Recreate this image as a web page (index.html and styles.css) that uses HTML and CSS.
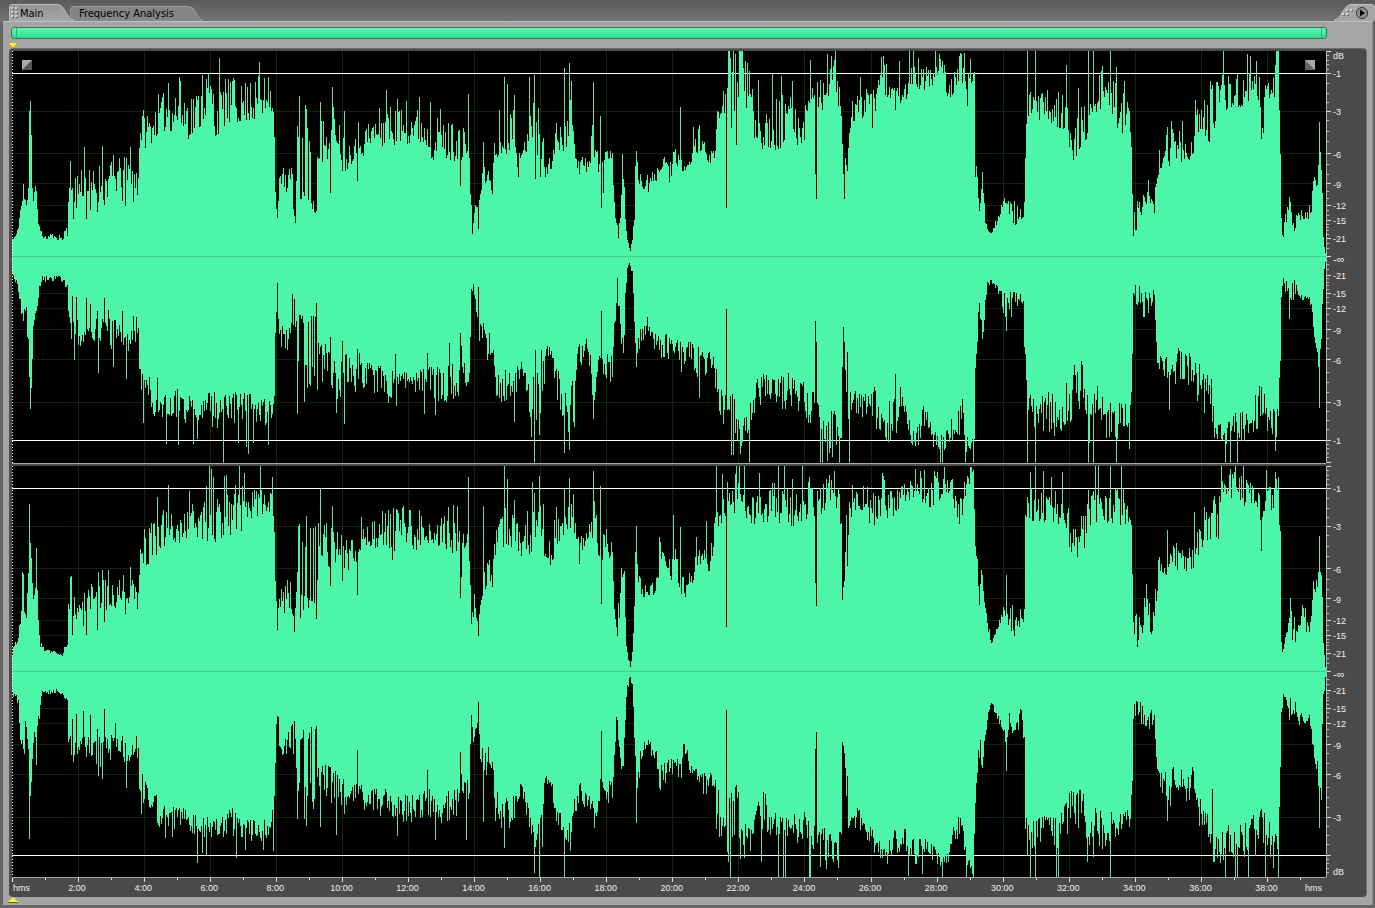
FILE: index.html
```html
<!DOCTYPE html>
<html lang="en">
<head>
<meta charset="utf-8">
<title>Main</title>
<link rel="stylesheet" href="styles.css">
</head>
<body>
<header class="topbar">
  <nav class="tabs" role="tablist">
    <button class="tab tab-main" role="tab" aria-selected="true">
      <svg class="tab-shape" width="66" height="17" viewBox="0 0 66 17" aria-hidden="true">
        <defs><linearGradient id="tg" x1="0" y1="0" x2="0" y2="1"><stop offset="0" stop-color="#939393"/><stop offset="1" stop-color="#a8a8a8"/></linearGradient></defs>
        <path d="M0 17V3Q0 .5 3 .5H48C57 .5 57 16 66 17Z" fill="url(#tg)"/>
        <path d="M.5 17V3Q.5 .5 3 .5H48C57 .5 57 16 65 16" fill="none" stroke="#bdbdbd"/>
        <g fill="#d2d2d2"><path d="M2 3h2v2h-2zM6 3h2v2h-2zM2 7h2v2h-2zM6 7h2v2h-2zM2 11h2v2h-2zM6 11h2v2h-2z"/></g>
        <g fill="#747474"><path d="M4 4h1v2h-2v-1h1zM8 4h1v2h-2v-1h1zM4 8h1v2h-2v-1h1zM8 8h1v2h-2v-1h1zM4 12h1v2h-2v-1h1zM8 12h1v2h-2v-1h1z"/></g>
      </svg>
      <span class="tab-text">Main</span>
    </button>
    <button class="tab tab-freq" role="tab" aria-selected="false">
      <svg class="tab-shape" width="134" height="15" viewBox="0 0 134 15" aria-hidden="true">
        <path d="M0 15Q-2 .5 4 .5H118C127 .5 125 13 134 15Z" fill="#858585"/>
        <path d="M0 12Q-1 .5 4 .5H118C127 .5 125 13 133 14" fill="none" stroke="#a0a0a0"/>
      </svg>
      <span class="tab-text">Frequency Analysis</span>
    </button>
  </nav>
  <button class="panel-menu" aria-label="Panel menu">
    <svg width="42" height="17" viewBox="0 0 42 17" aria-hidden="true">
      <path d="M0 17C9 15 8 .5 18 .5H37Q41 .5 41 5V17Z" fill="#a5a5a5"/>
      <path d="M0 16C9 15 8 .5 18 .5H37Q41 .5 41 5" fill="none" stroke="#c4c4c4"/>
      <g fill="#d8d8d8"><path d="M12 5h2v2h-2zM16 5h2v2h-2zM8 9h2v2h-2zM12 9h2v2h-2z"/></g>
      <g fill="#6d6d6d"><path d="M14 6h1v2h-2v-1h1zM18 6h1v2h-2v-1h1zM10 10h1v2h-2v-1h1zM14 10h1v2h-2v-1h1z"/></g>
      <circle cx="28" cy="9" r="5.500" fill="#919191" stroke="#303030"/>
      <path d="M26 5.500L31 9L26 12.500Z" fill="#000"/>
    </svg>
  </button>
</header>
<main class="panel">
  <div class="overview" aria-label="Overview range"><span class="grip"></span><span class="grip"></span></div>
  <div class="marker-row">
    <svg width="10" height="6" viewBox="0 0 10 6" aria-hidden="true"><path d="M0 0H10L5 5Z" fill="#fbf13c"/><path d="M10 0L5 5L0 0" fill="none" stroke="#b49a20"/></svg>
  </div>
  <div class="display">
    <div class="channel"><svg class="plot" id="plot0" role="img" aria-label="Left channel waveform"></svg><svg class="db" id="db0"></svg></div>
    <div class="split"></div>
    <div class="channel"><svg class="plot" id="plot1" role="img" aria-label="Right channel waveform"></svg><svg class="db" id="db1"></svg></div>
    <div class="timeline"><svg class="time" id="time"></svg></div>
    <svg class="fade fade-in" width="10" height="10" viewBox="0 0 10 10" aria-hidden="true"><path d="M0 0H10V10H0Z" fill="#555"/><path d="M0 0H10L0 10Z" fill="#aaa"/></svg>
    <svg class="fade fade-out" width="10" height="10" viewBox="0 0 10 10" aria-hidden="true"><path d="M0 0H10V10H0Z" fill="#666"/><path d="M0 0H10V10Z" fill="#aaa"/></svg>
  </div>
  <div class="marker-row">
    <svg width="10" height="6" viewBox="0 0 10 6" aria-hidden="true"><path d="M0 5L5 0L10 5Z" fill="#fbf13c"/><path d="M0 5.500H10" stroke="#6b6320"/></svg>
  </div>
</main>
<script src="wave.js"></script>
</body>
</html>
```
FILE: styles.css
```css
* { box-sizing: border-box; }
html, body { height: 100%; }
body {
  margin: 0;
  padding: 0 2px 3px 3px;
  display: flex;
  flex-direction: column;
  background: #666;
  font: 11px/13px "DejaVu Sans Condensed", "Liberation Sans", sans-serif;
  color: #000;
}
button { border: 0; padding: 0; background: none; font: inherit; color: inherit; }
.topbar {
  display: flex;
  justify-content: space-between;
  align-items: flex-end;
  height: 21px;
  margin: 0 -2px 0 -3px;
  padding-left: 9px;
  background: linear-gradient(#5a5a5a, #747474);
}
.tabs { display: flex; align-items: flex-end; }
.tab { display: grid; align-items: center; text-align: left; }
.tab-shape, .tab-text { grid-area: 1 / 1; }
.tab-shape { display: block; }
.tab-main { position: relative; z-index: 1; }
.tab-main .tab-text { padding: 2px 0 0 11px; }
.tab-freq { margin-left: -5px; }
.tab-freq .tab-text { padding-left: 9px; }
.panel-menu, .panel-menu svg { display: block; height: 17px; }
.panel-menu { margin-right: -1px; width: 42px; }
.panel {
  flex: 1;
  min-height: 0;
  display: flex;
  flex-direction: column;
  padding: 5px 5px 2px 6px;
  background: #a5a5a5;
  border-top: 1px solid #c0c0c0;
  border-right: 1px solid #8a8a8a;
}
.overview {
  display: flex;
  justify-content: space-between;
  height: 12px;
  margin: 0 40px 0 2px;
  padding: 0 4px;
  border: 1px solid #36755a;
  border-radius: 3px;
  background: linear-gradient(#6df0b4, #46efa0 45%, #39d78c);
}
.grip { width: 1px; background: #2fb578; }
.marker-row { height: 6px; line-height: 0; }
.overview + .marker-row { margin-top: 4px; height: 5px; }
.marker-row svg { display: block; margin-left: -1px; }
.display {
  position: relative;
  flex: 1;
  min-height: 0;
  display: flex;
  flex-direction: column;
  padding: 2px 0 0 3px;
  border: 1px solid #6c6c6c;
  border-width: 1px 1px 0 0;
  border-radius: 4px;
  background: #4a4a4a;
}
.channel { flex: 1; min-height: 0; display: flex; }
.plot { flex: 1; min-width: 0; height: 100%; background: #000; }
.db { width: 40px; height: 100%; border-left: 1px solid #b0b0b0; }
.split { height: 3px; margin-right: 40px; border-top: 1px solid #a8a8a8; background: #4a4a4a; }
.timeline { height: 20px; padding-right: 40px; }
.time { display: block; width: 100%; height: 20px; overflow: visible; border-top: 1px solid #a8a8a8; }
.db, .plot { display: block; }
.db text, .time text { font: 9px "Liberation Sans", sans-serif; fill: #f0f0f0; }
.db .infinity { font-size: 11px; }
.fade { position: absolute; top: 11px; }
.fade-in { left: 13px; }
.fade-out { right: 51px; }
```
FILE: wave.js
```js
// Each envelope is a list of "x low high" keys; x runs from 12 to 1326, levels from 0 to 206.
const env = [
  [
    "12 16 20;16 19 24;18 30 36;20 44 50;22 50 68;23 62 75;24 55 68;26 46 56;28 70 92;29 146 150;30 155 158;31 120 128;32 66 72;33 56 62;35 60 84;36 60 82;37 40 50;38 28 34;40 25 31;42 21 25;44 18 21;48 18 22;50 20 26;55 18 21;60 17 23;63 17 21;65 27 34;67 22 30;68 46 76;70 55 95;72 60 88;80 60 90;84 65 100;86 60 88;95 60 88;102 62 100;110 65 95;120 72 98;130 70 102;137 68 90;138 80 90;139 100 120;140 118 145;144 115 150;150 118 142;160 130 160;170 132 170;180 130 175;190 125 165;200 135 170;207 150 184;212 145 180;215 122 160;220 135 165;230 138 180;240 140 172;250 142 178;260 140 180;270 150 180;272 150 160;273 140 148;274 120 124;275 65 70;276 45 55;277 37 40;278 42 70;279 70 88;285 65 92;290 80 95;293 50 80;295 40 45;296 60 85;297 90 135;316 70 140;317 100 130;322 110 140;330 100 130;333 130 150;340 105 135;343 90 125;350 95 115;356 110 140;362 105 130;370 110 140;380 115 150;387 118 150;395 118 150;405 118 150;415 120 150;425 115 140;435 100 140;445 100 135;459 105 140;460 70 72;461 95 100;463 105 130;466 105 115;468 105 115;469 90 115;470 38 70;472 25 35;474 42 50;479 50 62;482 70 85;484 75 90;490 75 90;492 62 66;493 65 100;494 105 115;497 90 125;500 105 120;505 110 150;510 115 150;514 125 160;518 85 110;520 90 100;525 105 125;528 120 165;530 130 175;533 120 160;537 105 145;541 85 140;545 80 115;550 88 95;553 95 130;557 110 135;563 110 150;568 110 165;572 125 165;574 110 140;576 90 100;580 85 112;585 85 100;590 88 100;592 115 160;594 110 160;598 80 105;603 70 100;606 95 118;609 100 115;612 100 115;613 70 80;615 40 50;617 25 35;618 18 20;620 40 50;622 85 100;624 60 70;625 35 40;627 17 20;629 9 12;630 5 7;632 16 20;634 40 60;635 90 92;636 98 105;638 75 85;645 65 80;650 65 85;655 75 85;660 88 95;665 90 110;669 75 95;675 90 108;685 85 95;690 90 95;695 105 115;700 105 130;705 105 115;710 95 110;715 95 110;718 130 145;722 145 165;725 150 180;728 150 190;732 120 200;739 120 200;740 206 206;743 206 206;745 135 195;750 150 190;755 125 160;760 115 150;770 115 155;780 112 160;790 120 160;800 118 150;805 120 145;808 150 175;812 160 190;815 150 165;818 155 175;827 150 180;832 165 200;836 170 195;840 150 175;842 135 145;844 83 90;847 85 105;850 130 170;860 140 160;870 140 170;875 130 165;880 170 185;885 160 200;890 165 180;896 135 170;903 150 175;910 165 185;915 175 206;925 165 190;935 175 206;943 190 206;947 155 185;955 170 206;965 160 206;970 160 206;975 180 195;976 85 110;978 75 80;980 45 55;983 60 80;986 35 45;988 27 30;992 24 28;997 33 38;1000 40 45;1005 55 65;1010 42 55;1015 35 55;1020 38 52;1023 30 40;1025 50 55;1026 100 125;1028 140 165;1065 135 170;1069 130 150;1070 100 130;1074 97 120;1080 110 150;1088 120 150;1092 145 170;1100 145 185;1110 150 185;1120 130 170;1131 130 155;1132 110 125;1134 22 50;1136 30 55;1140 35 55;1148 50 75;1152 40 60;1155 35 50;1157 75 95;1160 90 110;1165 90 120;1172 100 130;1180 100 130;1190 98 118;1194 98 112;1196 120 150;1205 125 150;1212 120 170;1220 150 185;1230 155 190;1240 155 185;1250 150 190;1260 158 180;1262 118 135;1264 125 150;1265 160 180;1275 160 180;1277 206 206;1279 206 206;1280 145 150;1281 100 110;1282 40 50;1283 15 22;1286 35 50;1290 45 60;1296 25 40;1302 40 50;1308 38 45;1312 45 60;1314 75 82;1318 70 75;1320 110 120;1321 105 110;1323 60 65;1324 20 30;1325 10 12;1326 4 5",
    "73 38;76 49;86 38;90 47;97 45;104 52;122 56;125 51;133 55;137 62;215 121;294 41;295 34;300 58;301 58;303 65;308 57;311 54;313 56;316 46;322 95;330 64;342 86;357 76;478 28;535 78;545 80;601 49;669 70;727 49;816 83;817 58;844 83;845 58;848 86;1233 154;84 110;102 111;113 102;130 110;158 163;168 174;179 180;202 182;208 184;219 199;225 178;234 177;250 174;259 195;268 180;297 131;299 161;305 152;306 148;320 155;332 170;344 146;386 167;397 158;406 156;419 160;430 155;440 148;468 163;483 115;499 147;504 180;507 173;514 162;529 180;534 182;538 149;564 189;569 194;571 176;593 175;600 141;622 103;636 106;681 150;694 130;700 132;729 206;730 206;734 206;736 203;748 194;759 177;773 184;782 181;793 176;811 197;828 203;836 206;861 180;882 200;884 201;900 196;910 206;914 206;983 85;1028 206;1036 206;1067 192;1079 169;1089 206;1094 206;1103 191;1111 206;1117 190;1125 176;1149 77;1168 130;1172 136;1183 136;1196 157;1205 157;1211 176;1224 206;1248 203;1251 201;1257 196;1290 60;1320 135"
  ],
  [
    "12 16 20;16 20 28;19 40 48;22 50 65;26 52 68;28 80 100;29 110 155;30 150 172;31 125 135;33 60 70;35 60 94;37 45 62;39 25 33;42 20 25;60 19 24;65 25 30;67 28 32;68 50 60;70 65 85;80 65 90;90 65 85;100 65 88;110 65 90;120 70 95;130 75 98;138 70 80;139 110 125;142 120 140;148 118 140;152 140 160;160 145 165;170 135 160;180 138 165;190 142 165;200 145 165;210 138 170;220 145 175;235 140 165;250 140 170;262 145 170;273 145 165;274 130 145;275 75 80;276 45 55;277 30 52;279 75 85;285 70 98;290 65 90;295 50 70;297 80 135;316 80 130;320 95 135;330 90 130;335 105 145;343 100 135;350 105 125;358 100 140;370 112 135;380 112 138;390 118 140;400 118 140;415 118 135;430 115 145;445 115 145;459 110 140;460 75 80;462 105 125;468 110 130;470 60 110;471 35 50;473 25 35;476 50 55;479 70 85;482 70 105;490 80 100;492 82 100;494 110 135;500 118 145;508 118 145;515 118 160;518 110 125;522 98 115;528 130 150;531 145 180;535 110 170;538 120 150;542 110 160;546 90 100;550 92 105;555 110 135;560 125 155;566 130 175;573 125 170;577 90 110;585 90 115;590 98 110;593 140 160;596 110 130;600 92 105;606 98 130;612 105 125;614 68 80;617 22 40;619 50 70;621 75 100;623 90 98;625 30 60;627 12 20;629 5 9;632 15 22;634 35 70;636 90 108;640 75 90;647 65 75;655 75 95;660 85 110;670 80 110;680 90 120;690 85 105;700 95 125;708 90 115;715 105 130;720 130 165;725 140 170;729 150 175;735 125 180;743 175 200;748 150 180;752 145 165;758 125 145;765 115 150;775 125 150;790 120 155;805 130 155;812 140 175;815 135 150;818 140 150;825 150 200;832 160 200;842 160 195;844 70 90;847 120 150;850 130 175;855 130 155;865 140 160;875 135 165;883 165 190;890 150 185;900 135 170;905 140 160;912 175 188;920 170 190;925 150 180;935 175 195;945 180 200;952 165 185;960 155 180;963 145 170;967 180 200;975 180 195;976 110 115;978 85 95;979 55 60;980 45 60;983 60 80;986 45 65;988 25 32;992 23 27;998 30 40;1005 40 60;1010 35 70;1015 35 50;1020 38 55;1024 40 55;1026 100 140;1028 145 190;1035 145 180;1045 140 180;1055 145 180;1065 145 175;1070 115 165;1077 105 150;1085 115 150;1090 145 190;1100 135 175;1110 150 185;1120 145 180;1131 150 175;1133 60 100;1134 22 40;1138 30 55;1145 40 62;1155 35 50;1156 60 75;1158 100 112;1165 100 125;1170 110 140;1180 92 120;1190 100 130;1197 110 145;1205 115 160;1212 130 170;1216 170 185;1225 165 190;1235 160 185;1250 155 185;1262 130 165;1270 155 185;1279 155 190;1281 100 130;1282 35 60;1284 16 22;1288 30 50;1295 25 42;1302 38 46;1310 38 42;1313 50 60;1315 80 85;1318 90 95;1320 115 130;1322 80 125;1324 20 50;1325 10 14;1326 4 6",
    "72 39;76 40;86 41;90 47;97 54;104 41;108 53;122 54;133 59;136 60;157 121;292 37;294 42;301 62;303 66;308 65;313 59;316 46;330 80;342 84;357 92;395 97;427 96;449 86;478 30;535 93;541 93;586 82;601 54;647 60;727 52;816 64;817 85;844 70;845 85;848 95;896 117;1262 130;74 103;98 116;113 110;126 122;143 166;166 187;178 188;193 187;197 182;223 206;238 186;246 190;248 197;253 186;268 188;297 157;304 145;336 156;344 167;388 146;396 149;424 157;435 158;514 165;531 180;534 206;539 178;564 196;569 193;574 170;593 162;636 110;700 141;732 198;734 198;741 197;750 206;821 206;823 206;828 204;833 200;840 206;850 206;941 206;943 206;966 206;974 206;983 82;1007 74;1028 206;1036 206;1089 206;1094 206;1117 206;1130 192;1170 153;1226 206;1231 206;1238 206;1276 194;1290 62;1320 151"
  ],
  [
    "12 17 20;15 25 37;18 25 40;20 45 60;22 65 100;23 85 118;24 60 75;26 45 65;28 80 110;29 160 170;30 125 132;31 110 116;33 68 75;35 85 90;36 100 124;37 85 100;38 50 60;40 27 50;42 22 26;50 19 22;62 16 18;64 22 26;67 27 32;68 55 75;70 65 99;73 60 88;80 65 85;100 65 90;120 70 95;130 75 100;138 75 90;140 110 130;148 112 145;155 120 150;165 132 165;175 135 165;185 128 160;195 138 170;205 140 180;215 130 175;225 145 175;235 142 185;250 155 185;262 155 180;270 165 185;272 170 190;274 130 140;275 90 95;277 38 50;279 55 80;285 65 95;290 70 100;295 40 65;297 100 150;316 90 145;320 125 160;330 110 145;340 120 145;345 105 140;352 110 135;357 110 145;365 130 145;380 128 155;395 125 165;410 130 165;425 125 155;435 130 145;450 125 165;459 128 165;460 70 74;462 120 142;468 135 150;470 60 120;471 45 50;474 65 90;478 48 60;482 80 110;485 85 110;490 95 115;492 78 85;494 120 150;500 130 160;508 130 175;518 125 155;521 110 130;525 125 165;535 130 180;542 135 180;546 110 130;551 110 130;555 125 160;565 145 165;572 150 180;576 105 140;583 122 135;590 130 150;594 140 170;600 110 145;606 110 145;612 120 130;614 60 75;617 38 55;619 60 95;621 105 115;624 80 100;626 25 40;628 12 16;630 5 8;632 15 20;634 60 70;635 120 125;636 120 145;638 90 100;642 75 88;650 70 85;656 85 95;660 100 135;666 95 115;672 90 110;675 115 130;680 85 115;688 78 100;694 95 120;700 110 130;710 105 130;715 130 150;720 150 175;725 155 180;728 140 180;735 150 200;745 150 175;760 155 180;775 155 190;790 150 185;805 155 170;808 160 206;812 185 206;815 160 190;818 155 185;826 165 190;835 185 206;838 150 190;842 140 170;843 75 90;845 90 95;847 110 160;850 150 190;860 165 180;872 150 195;882 160 200;890 155 180;905 170 190;915 180 206;930 170 200;950 180 206;957 155 190;961 150 180;966 180 206;974 190 206;975 170 206;976 125 150;978 105 115;980 65 80;981 90 100;983 90 102;985 70 78;988 45 55;992 28 32;996 38 42;1003 55 60;1006 60 80;1009 50 70;1015 40 70;1020 45 62;1024 40 65;1025 55 65;1026 150 165;1030 155 190;1040 155 185;1050 155 180;1060 150 185;1068 150 180;1071 120 150;1077 120 155;1087 130 160;1092 155 190;1105 152 175;1115 155 190;1125 150 185;1132 145 165;1133 95 140;1134 30 60;1140 30 55;1147 55 80;1152 42 65;1155 40 60;1156 60 100;1160 100 115;1165 90 120;1170 105 140;1180 105 125;1190 105 128;1195 110 150;1205 135 160;1213 140 170;1220 135 175;1225 175 200;1235 180 206;1245 170 190;1250 175 195;1260 165 180;1262 130 150;1265 160 190;1275 165 190;1279 180 195;1281 120 140;1282 30 40;1283 16 20;1287 38 50;1292 35 60;1297 32 50;1304 45 70;1310 40 50;1312 55 60;1314 85 92;1318 80 100;1320 110 125;1322 90 120;1324 20 30;1326 5 7",
    "72 37;76 53;83 46;86 37;97 42;104 50;125 58;137 63;294 40;300 54;303 62;308 64;316 53;330 86;342 91;357 77;392 112;478 36;601 68;669 61;727 45;816 89;817 66;843 72;844 85;848 106;1262 121;98 100;102 102;108 102;130 105;144 143;157 175;168 187;189 181;206 186;209 206;211 203;213 195;224 196;226 197;239 206;244 199;260 206;272 195;299 148;306 156;310 144;320 184;332 166;361 155;382 161;397 162;409 162;419 162;448 165;468 195;483 166;504 206;507 193;514 172;532 190;539 196;556 165;564 183;569 194;573 178;593 201;600 186;636 146;659 135;674 157;681 145;697 135;707 151;717 206;723 198;728 190;737 206;740 206;745 206;760 199;779 206;785 206;793 193;803 206;982 102;1007 97;1031 200;1036 206;1044 201;1052 195;1063 200;1089 182;1096 206;1099 206;1111 206;1122 206;1147 88;1168 142;1195 160;1205 165;1215 176;1222 206;1236 206;1244 206;1267 202;1276 200;1291 74;1320 136"
  ],
  [
    "12 16 20;15 25 36;18 25 35;20 45 70;23 65 95;26 45 60;28 75 80;29 160 168;30 120 140;31 110 115;33 60 75;36 65 94;38 45 55;40 30 40;42 18 22;60 17 22;65 25 28;67 28 30;68 58 75;72 65 85;80 70 88;90 65 85;100 66 95;110 68 95;120 72 90;130 75 100;138 75 90;139 105 120;145 110 140;152 125 145;160 130 155;170 135 160;180 135 155;190 145 160;205 148 170;215 150 165;230 140 170;240 148 165;260 150 170;272 140 160;274 120 130;275 90 92;276 50 60;278 38 52;279 70 80;285 70 88;295 50 80;297 90 140;316 80 140;320 100 140;330 100 135;345 115 145;360 115 140;375 118 145;395 125 150;410 128 150;425 120 145;440 120 150;459 120 150;460 78 80;462 110 130;466 115 160;469 105 140;470 70 80;471 44 55;474 60 80;478 45 60;480 80 98;485 80 105;492 75 100;494 120 150;500 130 155;510 130 155;517 120 140;521 105 115;526 130 150;530 150 180;537 150 190;542 130 150;545 105 115;550 108 125;556 130 150;563 150 165;570 155 175;575 120 140;580 115 135;590 115 140;594 145 160;600 110 130;605 115 135;612 110 125;614 65 85;617 36 50;619 60 90;621 95 115;623 95 105;625 40 60;627 12 20;630 4 7;632 12 20;634 40 70;636 105 140;640 80 95;646 68 80;655 78 100;660 95 120;668 90 105;675 90 115;685 75 105;692 85 100;700 100 120;710 100 125;718 120 160;725 150 175;728 130 180;732 125 190;738 120 165;742 150 190;750 155 185;755 140 155;765 125 160;775 145 170;790 145 175;805 145 170;812 160 190;815 150 170;818 155 175;826 160 190;835 170 195;842 155 180;843 75 90;847 100 150;850 145 175;858 135 155;870 155 170;880 170 195;888 175 195;895 160 180;905 160 180;915 170 195;925 170 190;935 175 200;945 185 206;952 165 180;958 145 170;963 150 185;968 190 200;974 190 206;975 150 190;977 110 120;979 75 90;981 70 85;983 85 100;985 65 75;988 45 55;992 28 32;998 42 48;1004 55 60;1007 60 80;1010 40 55;1015 45 65;1022 40 60;1025 60 75;1026 150 170;1032 145 175;1045 150 180;1060 150 175;1070 125 165;1080 120 155;1090 140 180;1100 140 180;1110 145 170;1120 145 165;1131 140 155;1133 80 120;1134 28 50;1140 30 55;1148 45 62;1155 38 55;1157 90 120;1160 95 110;1168 110 150;1175 95 120;1185 105 130;1194 100 130;1198 130 160;1208 130 160;1214 170 190;1225 160 190;1240 155 190;1252 150 180;1262 140 165;1270 155 185;1279 160 206;1281 80 120;1282 40 50;1284 17 25;1288 30 55;1295 28 45;1303 45 65;1310 42 48;1314 75 100;1318 90 105;1320 130 140;1322 80 130;1324 20 40;1326 4 6",
    "72 47;76 42;83 39;90 43;97 57;104 37;115 51;122 64;136 64;142 102;294 49;303 58;308 67;311 55;316 54;357 78;427 98;478 30;601 59;669 59;727 38;816 77;817 60;843 70;844 74;848 104;1213 117;73 90;98 104;102 107;126 116;141 142;165 166;172 165;197 191;202 181;206 184;236 186;245 178;263 178;273 179;297 147;304 147;306 154;320 155;336 163;397 164;435 168;466 168;483 150;504 176;534 201;539 206;542 175;564 206;570 179;636 151;729 190;731 206;741 187;745 186;762 190;779 206;784 206;786 206;810 206;811 206;821 195;827 197;839 196;909 204;923 202;967 206;974 206;1007 99;1028 184;1031 206;1036 206;1057 206;1059 206;1088 190;1094 185;1111 206;1168 149;1214 190;1226 206;1236 206;1238 206;1249 206;1256 184;1266 206;1279 206;1320 156"
  ]
];

const X0 = 12, N = 1315, HALF = 206, MINUTES = 39.77;

function random(seed) {
  return () => {
    seed = (seed + 0x6D2B79F5) | 0;
    let t = Math.imul(seed ^ (seed >>> 15), 1 | seed);
    t = (t + Math.imul(t ^ (t >>> 7), 61 | t)) ^ t;
    return ((t ^ (t >>> 14)) >>> 0) / 4294967296;
  };
}

function levels(index) {
  const [body, peaks] = env[index];
  const keys = body.split(";").map(k => k.split(" ").map(Number));
  const rnd = random(index * 97 + 11);
  const out = [];
  let k = 0;
  for (let i = 0; i < N; i++) {
    const x = X0 + i;
    while (k < keys.length - 2 && keys[k + 1][0] <= x) k++;
    const a = keys[k], b = keys[k + 1];
    const t = Math.min(1, (x - a[0]) / (b[0] - a[0]));
    const lo = a[1] + (b[1] - a[1]) * t, hi = a[2] + (b[2] - a[2]) * t;
    let r = 1.25 * Math.pow(rnd(), 1.15) - 0.2;
    if (x > 297 && x < 317) r = rnd() < 0.4 ? -0.4 : 0.4 + 0.6 * rnd();
    out.push(Math.round(lo + (hi - lo) * r));
  }
  peaks.split(";").forEach(p => {
    const [x, h] = p.split(" ").map(Number);
    out[x - X0] = h;
  });
  return out.map(h => Math.max(2, Math.min(HALF, h)));
}

const dbMajor = [0, 1, 3, 6, 9, 12, 15, 21];
const dbMinor = [0.2, 0.4, 0.6, 0.8, 1.5, 2, 2.5, 3.6, 4.3, 5, 7, 8, 10, 11, 13, 14, 16, 17, 18, 19.5, 24, 28];
const offset = db => 50 * Math.pow(10, -db / 20);
const line = (x1, y1, x2, y2, c) => `<line x1="${x1}" y1="${y1}" x2="${x2}" y2="${y2}" stroke="${c}" shape-rendering="crispEdges"/>`;

function drawPlot(ch) {
  let grid = "", body = "", thin = "";
  for (let m = 2; m < MINUTES; m += 2) {
    const x = (m / MINUTES * 100).toFixed(3) + "%";
    grid += line(x, 0, x, "100%", "#12260f");
  }
  dbMajor.slice(2).forEach(d => [-1, 1].forEach(s => {
    const y = (50 + s * offset(d)).toFixed(2) + "%";
    grid += line(0, y, "100%", y, "#12260f");
  }));
  const limits = [-1, 1].map(s => {
    const y = (50 + s * offset(1)).toFixed(2) + "%";
    return line(0, y, "100%", y, "#fff");
  }).join("");
  [-1, 1].forEach((s, side) => {
    const h = levels(ch * 2 + side);
    h.forEach((v, i) => {
      const near = Math.max(h[i - 1] || 0, h[i + 1] || 0);
      const solid = Math.min(v, near + 3);
      body += `M${i} ${HALF}h1v${s * solid}h-1z`;
      if (v > solid) thin += `M${i} ${HALF + s * solid}h1v${s * (v - solid)}h-1z`;
    });
  });
  document.getElementById("plot" + ch).innerHTML = grid + limits +
    `<svg width="100%" height="100%" viewBox="0 0 ${N} ${HALF * 2}" preserveAspectRatio="none" shape-rendering="crispEdges"><path d="${body}" fill="#4df5a8"/><path d="${thin}" fill="#75d6a4"/></svg>` +
    line(0, "50%", "100%", "50%", "#43cf8e") +
    `<line x1="0.5" y1="0" x2="0.5" y2="100%" stroke="#fff" stroke-dasharray="1 2" shape-rendering="crispEdges"/>`;
}

function drawScale(ch) {
  let s = "";
  [-1, 1].forEach(sign => {
    dbMinor.forEach(d => {
      const y = (50 + sign * offset(d)).toFixed(2) + "%";
      s += line(0, y, 2, y, "#bbb");
    });
    dbMajor.forEach(d => {
      const y = (50 + sign * offset(d)).toFixed(2) + "%";
      s += line(0, y, 4, y, "#ddd");
      if (d && !(ch && sign > 0 && d === 1)) s += `<text x="6" y="${y}" dy="4">-${d}</text>`;
    });
  });
  s += line(0, "50%", 4, "50%", "#ddd") + `<text class="infinity" x="6" y="50%" dy="6">-∞</text>`;
  s += ch ? `<text x="6" y="100%" dy="-3">dB</text>` : `<text x="6" y="0" dy="8">dB</text>`;
  document.getElementById("db" + ch).innerHTML = s;
}

function drawTime() {
  let s = `<text x="1" y="13">hms</text><text x="99.7%" y="13" text-anchor="end">hms</text>` + line(0, 0, 0, 4, "#eee");
  for (let m = 1; m < MINUTES; m++) {
    const x = (m / MINUTES * 100).toFixed(3) + "%";
    s += line(x, 0, x, m % 2 ? 2 : 4, "#ddd");
    if (m % 2 === 0) s += `<text x="${x}" y="13" dx="-1" text-anchor="middle">${m}:00</text>`;
  }
  document.getElementById("time").innerHTML = s;
}

[0, 1].forEach(ch => { drawPlot(ch); drawScale(ch); });
drawTime();
```
